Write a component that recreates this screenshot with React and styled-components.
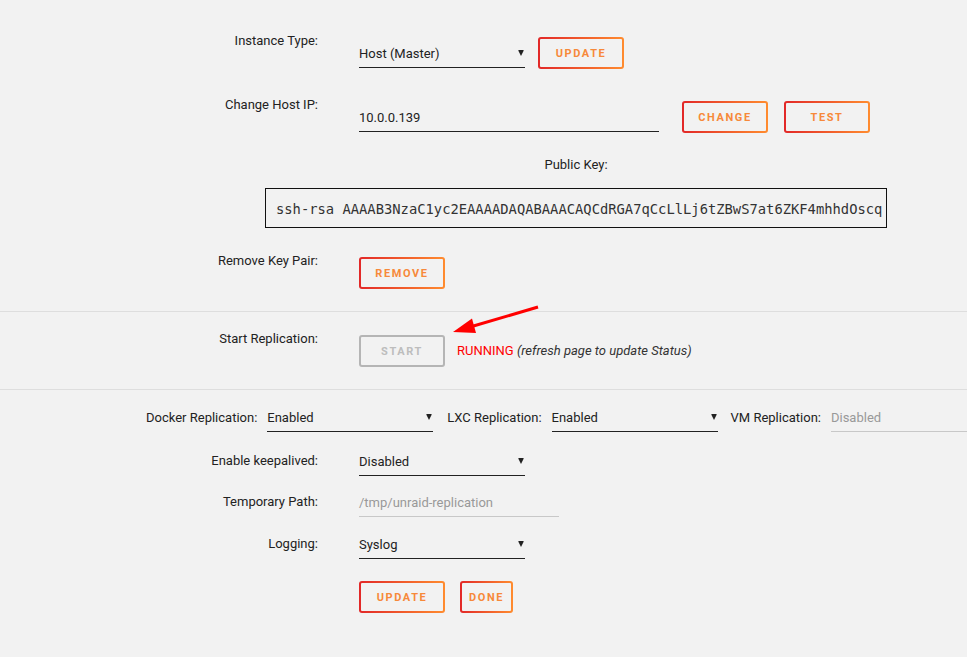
import styled, { createGlobalStyle } from "styled-components";

const GlobalStyle = createGlobalStyle`
  html, body {
    margin: 0;
    background: #f2f2f2;
  }
  body {
    font-family: Roboto, "Liberation Sans", sans-serif;
    font-size: 13px;
    color: #222;
    overflow: hidden;
  }
`;

const Page = styled.div`
  position: relative;
  width: 967px;
  height: 657px;
  padding-top: 31px;
  box-sizing: border-box;
  overflow: hidden;
`;

const Row = styled.div`
  display: grid;
  grid-template-columns: 318px auto;
  column-gap: 41px;
  align-items: ${(p) => (p.$compact ? "center" : "start")};
  margin-bottom: ${(p) => p.$gap ?? 26}px;
`;

const Label = styled.div`
  text-align: right;
  line-height: 20px;
  white-space: nowrap;
`;

const Controls = styled.div`
  display: flex;
  align-items: ${(p) => (p.$center ? "center" : "flex-start")};
  margin-top: ${(p) => (p.$compact ? 0 : 6)}px;
`;

const SelectBox = styled.div`
  position: relative;
  display: flex;
  align-items: center;
  box-sizing: border-box;
  width: ${(p) => p.$width ?? 166}px;
  height: 31px;
  padding-top: 2px;
  border-bottom: 1px solid #222;
  color: #222;

  &::after {
    content: "";
    position: absolute;
    right: 1px;
    top: 13px;
    border-left: 3px solid transparent;
    border-right: 3px solid transparent;
    border-top: 6px solid #222;
    border-radius: 1px;
  }
`;

const TextField = styled.div`
  display: flex;
  align-items: center;
  box-sizing: border-box;
  width: ${(p) => p.$width}px;
  flex-shrink: 0;
  height: 31px;
  padding-top: 2px;
  border-bottom: 1px solid ${(p) => (p.$muted ? "#c8c8c8" : "#222")};
  color: ${(p) => (p.$muted ? "#999" : "#222")};
`;

const Button = styled.button`
  box-sizing: border-box;
  height: 32px;
  width: ${(p) => (p.$narrow ? "auto" : "86px")};
  padding: 0 ${(p) => (p.$narrow ? 7 : 0)}px;
  margin-left: ${(p) => p.$left ?? 0}px;
  font-family: Roboto, "Liberation Sans", sans-serif;
  font-size: 11px;
  font-weight: 700;
  letter-spacing: 1.6px;
  text-transform: uppercase;
  border: 2px solid transparent;
  border-radius: 3px;
  color: ${(p) => (p.disabled ? "#bdbdbd" : "#f7893a")};
  background: ${(p) =>
    p.disabled
      ? "#f2f2f2"
      : "linear-gradient(#f2f2f2, #f2f2f2) padding-box, linear-gradient(90deg, #e22828, #ff8c2f) border-box"};
  border-color: ${(p) => (p.disabled ? "#b5b5b5" : "transparent")};
`;

const KeyBlock = styled.div`
  margin-left: 265px;
  width: 622px;
  margin-bottom: 23px;
`;

const KeyTitle = styled.div`
  text-align: center;
  line-height: 12px;
  margin-bottom: 17px;
`;

const KeyBox = styled.div`
  box-sizing: border-box;
  height: 40px;
  border: 1px solid #111;
  padding: 1px 0 0 10px;
  display: flex;
  align-items: center;
  overflow: hidden;
  white-space: nowrap;
  font-family: "DejaVu Sans Mono", "Liberation Mono", monospace;
  font-size: 13.8px;
  color: #333;
`;

const Divider = styled.hr`
  border: 0;
  border-top: 1px solid #dedede;
  margin: 0 0 ${(p) => p.$after}px;
`;

const Status = styled.span`
  margin-left: 12px;
  line-height: 32px;
  color: #222;

  b {
    font-weight: 400;
    color: #f00;
  }
  em {
    color: #333;
  }
`;

const InlineRow = styled.div`
  display: flex;
  align-items: center;
  padding-left: 146px;
  margin-bottom: 13px;
  white-space: nowrap;
`;

const InlineLabel = styled.span`
  margin-right: 10px;
  padding-top: 2px;
`;

const InlineSelect = styled(SelectBox)`
  margin-right: ${(p) => p.$after}px;
  flex-shrink: 0;
`;

const ArrowSvg = styled.svg`
  position: absolute;
  left: 0;
  top: 0;
  pointer-events: none;
`;

const Select = ({ value, width }) => <SelectBox $width={width}>{value}</SelectBox>;

export default function App() {
  return (
    <>
      <GlobalStyle />
      <Page>
        <Row>
          <Label>Instance Type:</Label>
          <Controls>
            <Select value="Host (Master)" />
            <Button $left={13}>Update</Button>
          </Controls>
        </Row>

        <Row>
          <Label>Change Host IP:</Label>
          <Controls>
            <TextField $width={300}>10.0.0.139</TextField>
            <Button $left={23}>Change</Button>
            <Button $left={16}>Test</Button>
          </Controls>
        </Row>

        <KeyBlock>
          <KeyTitle>Public Key:</KeyTitle>
          <KeyBox>
            ssh-rsa AAAAB3NzaC1yc2EAAAADAQABAAACAQCdRGA7qCcLlLj6tZBwS7at6ZKF4mhhdOscq
          </KeyBox>
        </KeyBlock>

        <Row $gap={22}>
          <Label>Remove Key Pair:</Label>
          <Controls>
            <Button>Remove</Button>
          </Controls>
        </Row>

        <Divider $after={17} />

        <Row $gap={22}>
          <Label>Start Replication:</Label>
          <Controls $center>
            <Button disabled>Start</Button>
            <Status>
              <b>RUNNING</b> <em>(refresh page to update Status)</em>
            </Status>
          </Controls>
        </Row>

        <Divider $after={11} />

        <InlineRow>
          <InlineLabel>Docker Replication:</InlineLabel>
          <InlineSelect $after={14}>Enabled</InlineSelect>
          <InlineLabel>LXC Replication:</InlineLabel>
          <InlineSelect $after={13}>Enabled</InlineSelect>
          <InlineLabel>VM Replication:</InlineLabel>
          <TextField $width={300} $muted>
            Disabled
          </TextField>
        </InlineRow>

        <Row $compact $gap={10}>
          <Label>Enable keepalived:</Label>
          <Controls $compact>
            <Select value="Disabled" />
          </Controls>
        </Row>

        <Row $compact $gap={11}>
          <Label>Temporary Path:</Label>
          <Controls $compact>
            <TextField $width={200} $muted>
              /tmp/unraid-replication
            </TextField>
          </Controls>
        </Row>

        <Row $compact $gap={22}>
          <Label>Logging:</Label>
          <Controls $compact>
            <Select value="Syslog" />
          </Controls>
        </Row>

        <Row $compact>
          <span />
          <Controls $compact>
            <Button>Update</Button>
            <Button $narrow $left={15}>
              Done
            </Button>
          </Controls>
        </Row>

        <ArrowSvg width="967" height="657" viewBox="0 0 967 657">
          <line x1="538" y1="307" x2="470" y2="327" stroke="#f00" strokeWidth="3" />
          <polygon points="453,332 472,318.5 476,333" fill="#f00" />
        </ArrowSvg>
      </Page>
    </>
  );
}
